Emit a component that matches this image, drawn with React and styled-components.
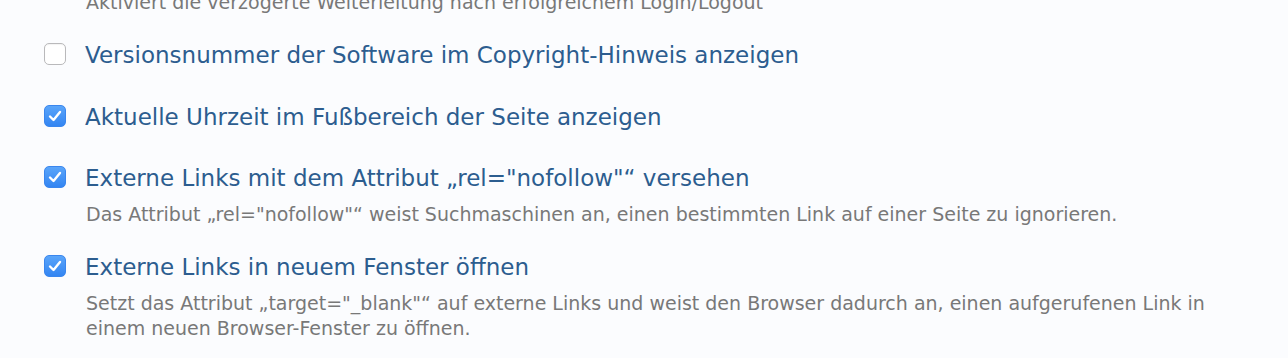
import styled, { createGlobalStyle } from "styled-components";

const Global = createGlobalStyle`
  html, body {
    margin: 0;
    padding: 0;
    background: #fbfcfe;
    overflow: hidden;
  }
  body {
    font-family: "DejaVu Sans", Verdana, sans-serif;
  }
`;

const Page = styled.div`
  padding: 0 20px 0 44px;
  margin-top: -10px;
`;

const Item = styled.div`
  display: grid;
  grid-template-columns: 22px 1fr;
  column-gap: 19px;
  margin-bottom: 27.5px;
`;

const Box = styled.span`
  box-sizing: border-box;
  width: 22px;
  height: 22px;
  margin-top: 5px;
  border-radius: 5px;
  display: flex;
  align-items: center;
  justify-content: center;
  background: ${(p) =>
    p.checked ? "linear-gradient(#5aa5fa, #3385f2)" : "#ffffff"};
  border: 1px solid ${(p) => (p.checked ? "#3a86ee" : "#b9b9bb")};
  box-shadow: ${(p) =>
    p.checked ? "none" : "inset 0 1px 1px rgba(0,0,0,0.05)"};
`;

const Title = styled.div`
  grid-column: 2;
  font-size: 23px;
  line-height: 34px;
  color: #2c5d8f;
`;

const Desc = styled.div`
  grid-column: 2;
  font-size: 19px;
  line-height: 25px;
  color: #787878;
  margin: ${(p) => (p.first ? "0 0 -4.5px" : "7px 0 -4.5px")} 1px;
  margin-left: 1px;
`;

function Check() {
  return (
    <svg width="14" height="12" viewBox="0 0 14 12">
      <path
        d="M2 6.5 L5.5 10 L12 2"
        fill="none"
        stroke="#fff"
        strokeWidth="2.4"
        strokeLinecap="round"
        strokeLinejoin="round"
      />
    </svg>
  );
}

const items = [
  {
    checked: false,
    title: "Versionsnummer der Software im Copyright-Hinweis anzeigen",
  },
  {
    checked: true,
    title: "Aktuelle Uhrzeit im Fußbereich der Seite anzeigen",
  },
  {
    checked: true,
    title: "Externe Links mit dem Attribut „rel=\"nofollow\"“ versehen",
    desc: "Das Attribut „rel=\"nofollow\"“ weist Suchmaschinen an, einen bestimmten Link auf einer Seite zu ignorieren.",
  },
  {
    checked: true,
    title: "Externe Links in neuem Fenster öffnen",
    desc: "Setzt das Attribut „target=\"_blank\"“ auf externe Links und weist den Browser dadurch an, einen aufgerufenen Link in einem neuen Browser-Fenster zu öffnen.",
  },
];

export default function App() {
  return (
    <>
      <Global />
      <Page>
        <Item>
          <Desc first>
            Aktiviert die verzögerte Weiterleitung nach erfolgreichem Login/Logout
          </Desc>
        </Item>
        {items.map((it) => (
          <Item key={it.title}>
            <Box checked={it.checked}>{it.checked && <Check />}</Box>
            <Title>{it.title}</Title>
            {it.desc && <Desc>{it.desc}</Desc>}
          </Item>
        ))}
      </Page>
    </>
  );
}
